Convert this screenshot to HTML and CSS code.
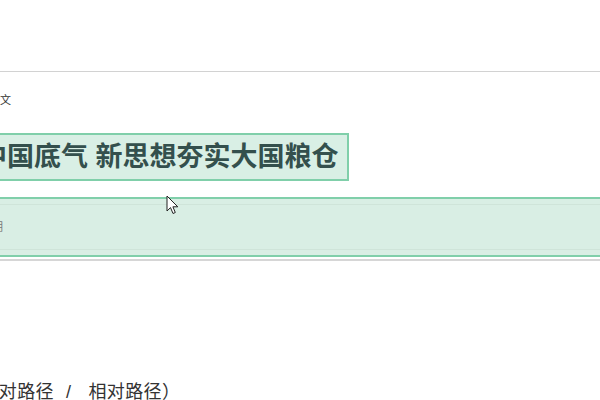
FILE: index.html
```html
<!DOCTYPE html>
<html lang="zh-CN">
<head>
<meta charset="utf-8">
<title>中国底气 新思想夯实大国粮仓</title>
<link rel="stylesheet" href="styles.css">
</head>
<body>
<div class="main">
  <div class="header"></div>
  <div class="crumb">正文</div>
  <h1 class="title">中国底气 新思想夯实大国粮仓</h1>
  <div class="info">
    <div class="info-row"><span class="meta">日期</span></div>
  </div>
  <div class="rule"></div>
  <p class="path">（绝对路径<span class="sep">/</span>相对路径）</p>
</div>
<svg class="cursor" width="13" height="20" viewBox="0 0 13 20" aria-hidden="true">
  <path d="M1 1 L1 16 L4.5 12.6 L7 18.5 L9.3 17.5 L6.9 11.8 L11.8 11.8 Z" fill="#fff" stroke="#222" stroke-width="1" stroke-linejoin="round"/>
</svg>
</body>
</html>
```
FILE: styles.css
```css
html, body {
  margin: 0;
  padding: 0;
  background: #fff;
  overflow: hidden;
}
body {
  position: relative;
  width: 600px;
  height: 400px;
  font-family: "Liberation Sans", "Noto Sans CJK SC", sans-serif;
  color: #333;
}
.main {
  margin-left: -60px;
  width: 720px;
}
.header {
  height: 71px;
  border-bottom: 1px solid #d2d2d2;
}
.crumb {
  margin-top: 20px;
  padding-left: 49px;
  font-size: 11px;
  line-height: 16px;
  color: #333;
}
.title {
  display: inline-block;
  margin: 25px 0 0 30px;
  padding: 2px 8px;
  border: 2px solid #80cfaa;
  background: #d9efe5;
  font-size: 27px;
  line-height: 40px;
  font-weight: bold;
  color: #34504d;
}
.info {
  margin-top: 16px;
  border-top: 2px solid #80cfaa;
  border-bottom: 2px solid #80cfaa;
  background: #d9eee4;
  padding: 5px 0;
}
.info-row {
  height: 44px;
  border-top: 1px solid #cfe4d9;
  border-bottom: 1px solid #cfe4d9;
  display: flex;
  align-items: center;
  padding-left: 41px;
}
.meta {
  font-size: 11px;
  line-height: 14px;
  color: #777;
}
.rule {
  margin-top: 2px;
  height: 2px;
  background: #d6d6d6;
}
.path {
  margin: 118px 0 0 0;
  padding-left: 22px;
  font-size: 18px;
  line-height: 26px;
  color: #333;
  letter-spacing: 0.4px;
}
.sep {
  margin: 0 17px 0 12px;
}
.cursor {
  position: absolute;
  left: 166px;
  top: 195px;
}
```
